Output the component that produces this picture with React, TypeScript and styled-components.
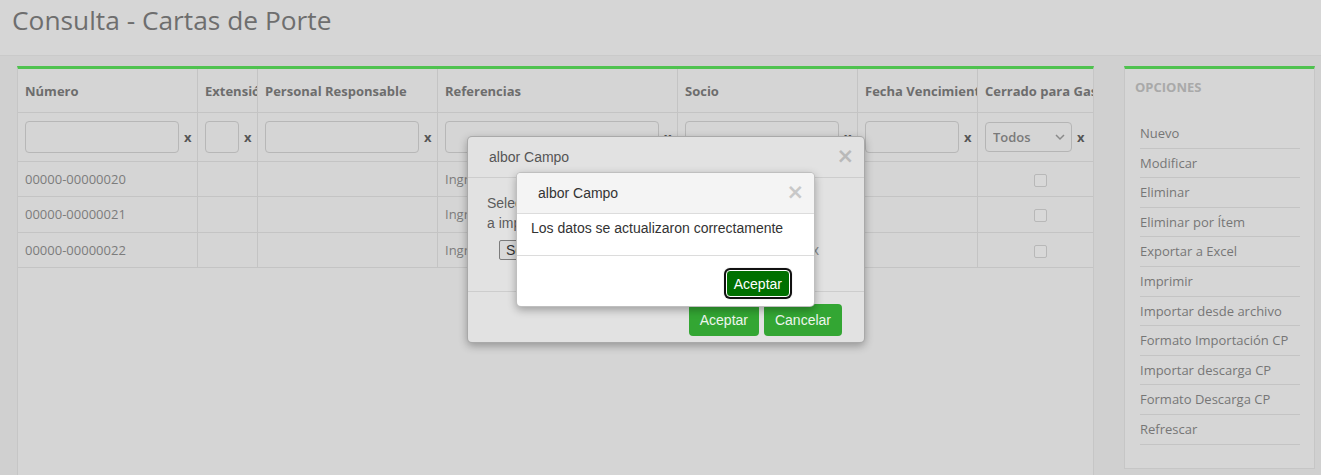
import React from "react";
import styled, { createGlobalStyle } from "styled-components";

const Global = createGlobalStyle`
  html, body { margin: 0; padding: 0; }
  body {
    background: #d0d0d0;
    font-family: "Open Sans", "Liberation Sans", sans-serif;
    overflow: hidden;
  }
  * { box-sizing: border-box; }
`;

const Page = styled.div`
  position: relative;
  width: 1321px;
  height: 475px;
  overflow: hidden;
  background: #d0d0d0;
`;

const TitleBar = styled.header`
  height: 56px;
  background: #d6d6d6;
  border-bottom: 1px solid #cacaca;
  padding: 0 12px;
`;

const Title = styled.h1`
  margin: 0;
  font-weight: 400;
  font-size: 26.3px;
  line-height: 40px;
  color: #6e6e6e;
`;

const Content = styled.main`
  display: flex;
  align-items: flex-start;
  gap: 30px;
  padding: 10px 0 0 17px;
`;

const TablePanel = styled.section`
  width: 1077px;
  height: 420px;
  background: #d5d5d5;
  border-top: 3px solid #4fc24f;
  border-left: 1px solid #c6c6c6;
  border-right: 1px solid #c6c6c6;
  overflow: hidden;
`;

const Grid = styled.table`
  border-collapse: separate;
  border-spacing: 0;
  table-layout: fixed;
  width: 1086px;
`;

const Th = styled.th<{ $w: number }>`
  width: ${(p) => p.$w}px;
  height: 44px;
  padding: 0 8px 0 7px;
  text-align: left;
  font-size: 13px;
  font-weight: 700;
  color: #6d6d6d;
  white-space: nowrap;
  overflow: hidden;
  text-overflow: clip;
  border-right: 1px solid #c4c4c4;
  border-bottom: 1px solid #c4c4c4;
`;

const FilterCell = styled.td`
  height: 49px;
  padding: 0 5px 0 7px;
  border-right: 1px solid #c4c4c4;
  border-bottom: 1px solid #c4c4c4;
  vertical-align: middle;
`;

const FilterWrap = styled.div`
  display: flex;
  align-items: center;
  gap: 5px;
`;

const FilterInput = styled.input`
  flex: 1;
  min-width: 0;
  height: 32px;
  border: 1px solid #b7b7b7;
  border-radius: 4px;
  background: #d5d5d5;
  outline: none;
`;

const Clear = styled.span`
  width: 8px;
  font-size: 13px;
  font-weight: 700;
  color: #555;
  line-height: 1;
`;

const SelectBox = styled.div`
  position: relative;
  width: 87px;
  height: 30px;
`;

const Select = styled.select`
  appearance: none;
  width: 100%;
  height: 100%;
  border: 1px solid #b5b5b5;
  border-radius: 4px;
  background: #d5d5d5;
  padding: 0 0 0 7px;
  font-family: "Open Sans", sans-serif;
  font-size: 13px;
  font-weight: 600;
  color: #7a7a7a;
  outline: none;
`;

const Chevron = styled.svg`
  position: absolute;
  right: 7px;
  top: 12px;
  pointer-events: none;
`;

const Td = styled.td<{ $center?: boolean }>`
  height: 35.3px;
  padding: 0 8px 0 7px;
  font-size: 13px;
  color: #7c7c7c;
  white-space: nowrap;
  overflow: hidden;
  text-align: ${(p) => (p.$center ? "center" : "left")};
  border-right: 1px solid #c4c4c4;
  border-bottom: 1px solid #c4c4c4;
  vertical-align: middle;
`;

const Check = styled.span`
  display: inline-block;
  width: 13px;
  height: 13px;
  border: 1px solid #b8b8b8;
  border-radius: 2px;
  background: #d8d8d8;
  vertical-align: middle;
`;

const Sidebar = styled.aside`
  width: 191px;
  height: 403px;
  background: #d6d6d6;
  border-top: 3px solid #4fc24f;
  border-left: 1px solid #c6c6c6;
  border-right: 1px solid #c6c6c6;
  border-bottom: 1px solid #c6c6c6;
  padding: 8px 14px 0 10px;
`;

const SideTitle = styled.h3`
  margin: 0 0 22px;
  font-size: 13px;
  font-weight: 700;
  line-height: 20px;
  color: #a9a9a9;
`;

const Menu = styled.ul`
  list-style: none;
  margin: 0;
  padding: 0 0 0 5px;
`;

const MenuItem = styled.li`
  height: 29.6px;
  line-height: 28.6px;
  font-size: 13px;
  color: #767676;
  border-bottom: 1px solid #c4c4c4;
  white-space: nowrap;
`;

/* Modals (overlaying content) */

const ModalBox = styled.div<{ $x: number; $y: number; $w: number; $h: number; $bg: string }>`
  position: absolute;
  left: ${(p) => p.$x}px;
  top: ${(p) => p.$y}px;
  width: ${(p) => p.$w}px;
  height: ${(p) => p.$h}px;
  background: ${(p) => p.$bg};
  border: 1px solid rgba(0, 0, 0, 0.25);
  border-radius: 5px;
  box-shadow: 0 3px 9px rgba(0, 0, 0, 0.3);
  font-family: "Liberation Sans", Arial, sans-serif;
  overflow: hidden;
  display: flex;
  flex-direction: column;
`;

const ModalHead = styled.div<{ $bg?: string; $line: string; $color: string }>`
  height: 41px;
  flex: none;
  display: flex;
  align-items: center;
  justify-content: space-between;
  padding: 0 10px 0 21px;
  background: ${(p) => p.$bg || "transparent"};
  border-bottom: 1px solid ${(p) => p.$line};
  font-size: 14px;
  color: ${(p) => p.$color};
`;

const CloseX = styled.span<{ $color: string }>`
  font-family: "DejaVu Sans", sans-serif;
  font-size: 21px;
  font-weight: 700;
  line-height: 1;
  color: ${(p) => p.$color};
  margin-top: -1px;
`;

const Body1 = styled.div`
  height: 114px;
  flex: none;
  padding: 15px 19px 0 19px;
  border-bottom: 1px solid #cdcdcd;
  font-size: 14px;
  line-height: 20px;
  color: #5c5c5c;
`;

const FileRow = styled.div`
  display: flex;
  align-items: center;
  justify-content: space-between;
  margin: 7px 26px 0 12px;
`;

const FileButton = styled.span`
  display: inline-block;
  height: 20px;
  line-height: 18px;
  padding: 0 6px;
  border: 1px solid #7c7c7c;
  border-radius: 2px;
  background: #d9d9d9;
  font-size: 14px;
  color: #333;
`;

const FileX = styled.span`
  font-size: 14px;
  color: #8a8a8a;
`;

const Footer = styled.div<{ $pt: number; $pr: number }>`
  display: flex;
  justify-content: flex-end;
  gap: 5px;
  padding: ${(p) => p.$pt}px ${(p) => p.$pr}px 0 0;
`;

const GreenButton = styled.button`
  height: 32px;
  padding: 0 11px;
  border: none;
  border-radius: 4px;
  background: #33a633;
  color: #eef5ee;
  font-family: "Liberation Sans", Arial, sans-serif;
  font-size: 14px;
`;

const Body2 = styled.div`
  height: 42px;
  flex: none;
  padding: 4px 14px 0;
  border-bottom: 1px solid #dcdcdc;
  font-size: 14px;
  line-height: 20px;
  color: #333;
`;

const FocusButton = styled.button`
  height: 27px;
  padding: 0 7px;
  border: 1px solid #fff;
  border-radius: 4px;
  background: #007000;
  box-shadow: 0 0 0 2px #111, 0 0 0 3px #f4f4f4;
  color: #fff;
  font-family: "Liberation Sans", Arial, sans-serif;
  font-size: 14px;
`;

const columns = [
  { label: "Número", w: 180 },
  { label: "Extensión", w: 60 },
  { label: "Personal Responsable", w: 180 },
  { label: "Referencias", w: 240 },
  { label: "Socio", w: 180 },
  { label: "Fecha Vencimiento", w: 120 },
  { label: "Cerrado para Gastos", w: 126 },
];

const rows = ["00000-00000020", "00000-00000021", "00000-00000022"];

const options = [
  "Nuevo",
  "Modificar",
  "Eliminar",
  "Eliminar por Ítem",
  "Exportar a Excel",
  "Imprimir",
  "Importar desde archivo",
  "Formato Importación CP",
  "Importar descarga CP",
  "Formato Descarga CP",
  "Refrescar",
];

export default function App() {
  return (
    <Page>
      <Global />
      <TitleBar>
        <Title>Consulta - Cartas de Porte</Title>
      </TitleBar>
      <Content>
        <TablePanel>
          <Grid>
            <thead>
              <tr>
                {columns.map((c) => (
                  <Th key={c.label} $w={c.w}>
                    {c.label}
                  </Th>
                ))}
              </tr>
            </thead>
            <tbody>
              <tr>
                {columns.slice(0, 6).map((c) => (
                  <FilterCell key={c.label}>
                    <FilterWrap>
                      <FilterInput />
                      <Clear>x</Clear>
                    </FilterWrap>
                  </FilterCell>
                ))}
                <FilterCell>
                  <FilterWrap>
                    <SelectBox>
                      <Select defaultValue="Todos">
                        <option>Todos</option>
                      </Select>
                      <Chevron width="10" height="7" viewBox="0 0 10 7">
                        <path d="M1 1l4 4 4-4" fill="none" stroke="#8a8a8a" strokeWidth="1.5" />
                      </Chevron>
                    </SelectBox>
                    <Clear>x</Clear>
                  </FilterWrap>
                </FilterCell>
              </tr>
              {rows.map((r) => (
                <tr key={r}>
                  <Td>{r}</Td>
                  <Td />
                  <Td />
                  <Td>Ingreso</Td>
                  <Td />
                  <Td />
                  <Td $center>
                    <Check />
                  </Td>
                </tr>
              ))}
            </tbody>
          </Grid>
        </TablePanel>
        <Sidebar>
          <SideTitle>OPCIONES</SideTitle>
          <Menu>
            {options.map((o) => (
              <MenuItem key={o}>{o}</MenuItem>
            ))}
          </Menu>
        </Sidebar>
      </Content>

      <ModalBox $x={467} $y={136} $w={398} $h={207} $bg="#e2e2e2">
        <ModalHead $line="#cdcdcd" $color="#555">
          <span>albor Campo</span>
          <CloseX $color="#b9b9b9">×</CloseX>
        </ModalHead>
        <Body1>
          Seleccione el archivo que desea
          <br />
          a importar
          <FileRow>
            <FileButton>Seleccionar archivo</FileButton>
            <FileX>x</FileX>
          </FileRow>
        </Body1>
        <Footer $pt={12} $pr={22}>
          <GreenButton>Aceptar</GreenButton>
          <GreenButton>Cancelar</GreenButton>
        </Footer>
      </ModalBox>

      <ModalBox $x={516} $y={172} $w={299} $h={135} $bg="#ffffff">
        <ModalHead $bg="#f4f4f4" $line="#dcdcdc" $color="#333">
          <span>albor Campo</span>
          <CloseX $color="#c8c8c8">×</CloseX>
        </ModalHead>
        <Body2>Los datos se actualizaron correctamente</Body2>
        <Footer $pt={14} $pr={24}>
          <FocusButton>Aceptar</FocusButton>
        </Footer>
      </ModalBox>
    </Page>
  );
}
